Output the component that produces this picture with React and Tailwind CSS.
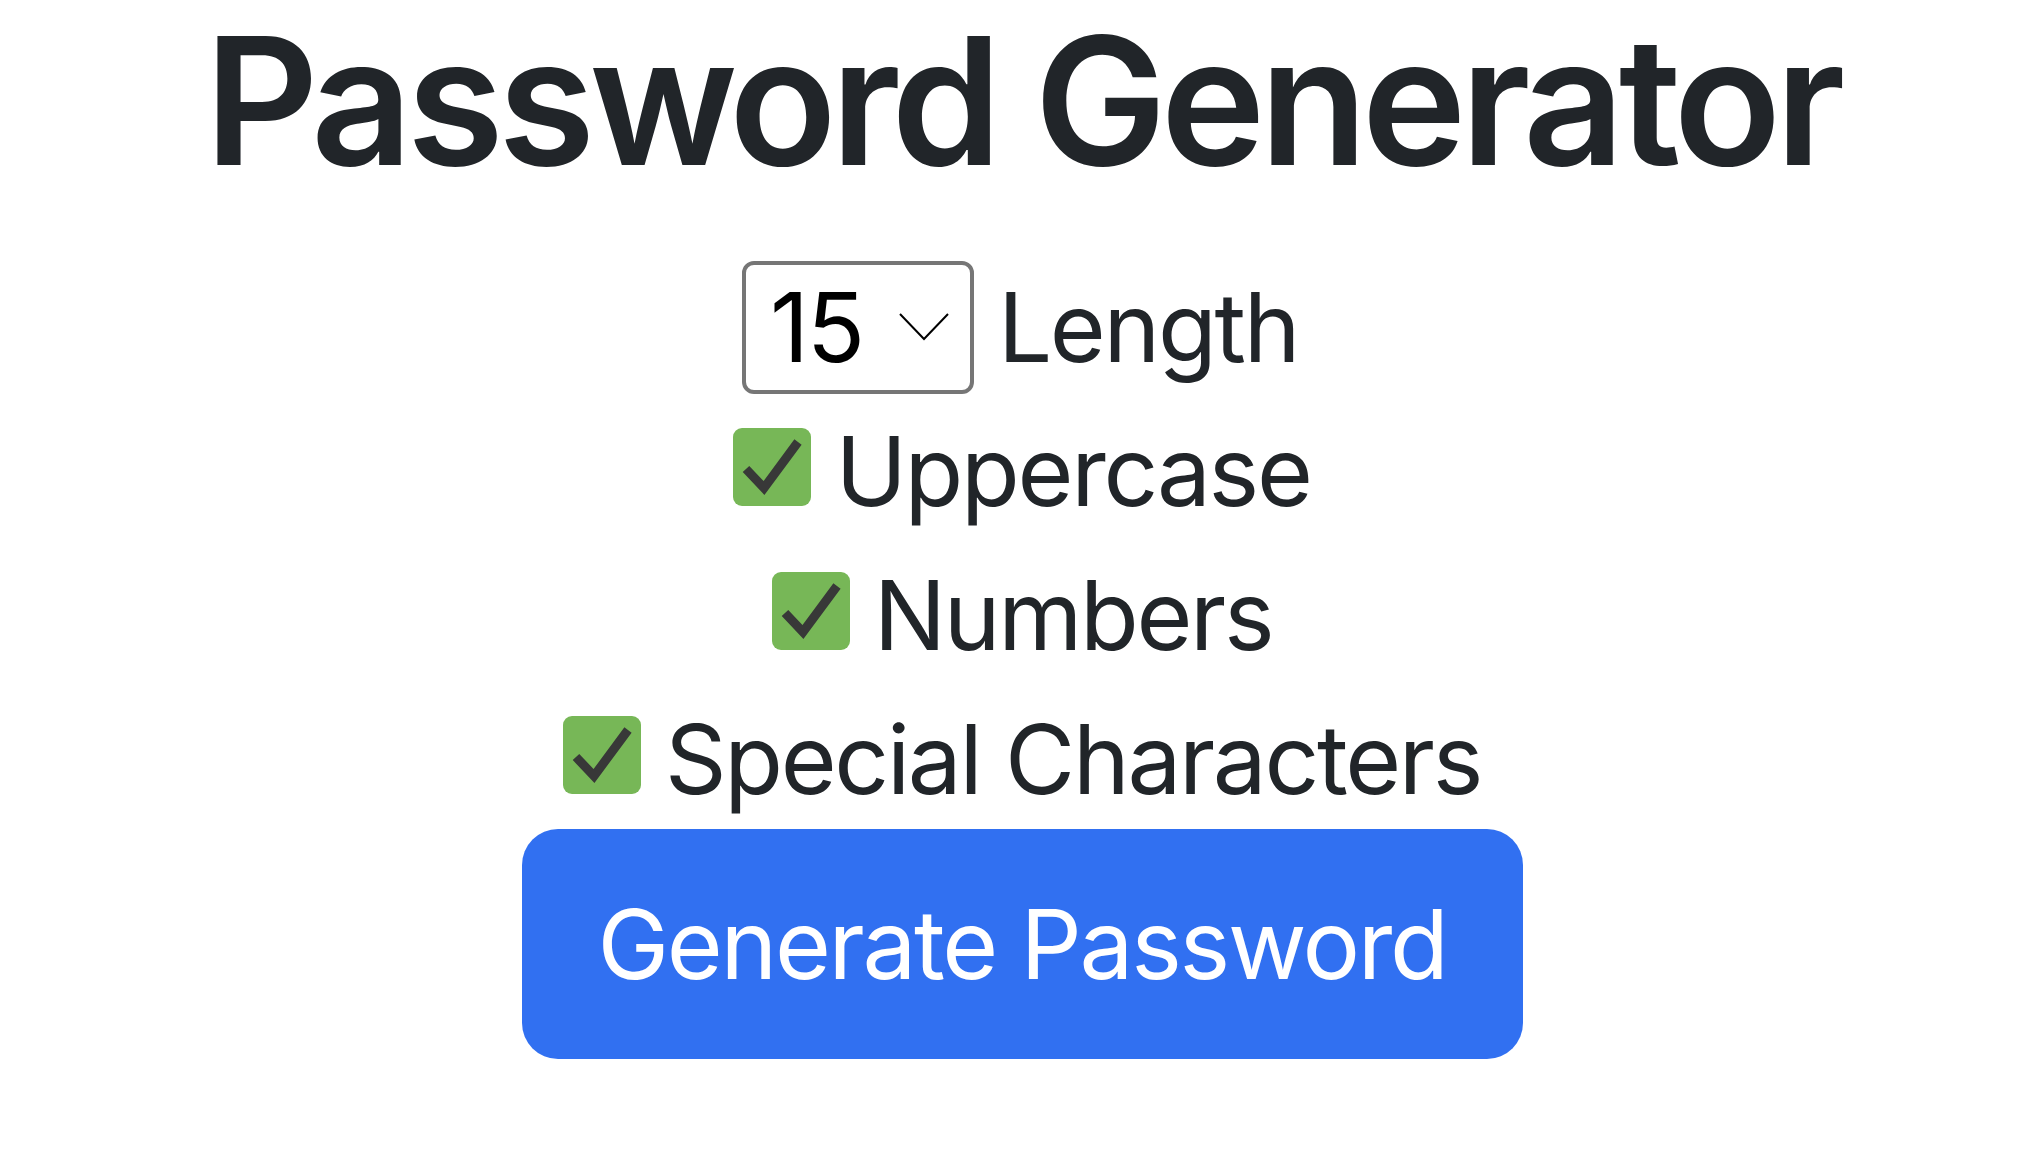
import React, { useState } from 'react';

function CheckIcon() {
  return (
    <svg width="78" height="78" viewBox="0 0 78 78" className="shrink-0">
      <rect x="0" y="0" width="78" height="78" rx="9" fill="#77b757" />
      <polyline points="13,41 31,60 65,14" fill="none" stroke="#383838" strokeWidth="9" />
    </svg>
  );
}

function Option({ label, checked }) {
  return (
    <div className="flex items-baseline gap-[24px] leading-[144px]">
      {checked && <CheckIcon />}
      <span>{label}</span>
    </div>
  );
}

export default function App() {
  const [length] = useState(15);

  const options = [
    { label: 'Uppercase', checked: true },
    { label: 'Numbers', checked: true },
    { label: 'Special Characters', checked: true },
  ];

  return (
    <div className="min-h-screen bg-white flex flex-col items-center text-[#212529] font-['Inter','Liberation_Sans',sans-serif] text-[96px] tracking-[-2.3px]">
      {/* Title */}
      <h1 className="text-[177px] font-semibold leading-[202px] tracking-[-6px] mb-[53px]">
        Password Generator
      </h1>

      {/* Length */}
      <div className="flex items-center gap-[24px] h-[144px] pr-[4px]">
        <div className="w-[232px] h-[133px] border-[4px] border-[#767676] rounded-[12px] flex items-center justify-between pl-[24px] pr-[21px] text-black">
          <span className="leading-none">{length}</span>
          <svg width="50" height="28" viewBox="0 0 50 28">
            <polyline points="1,1 25,26 49,1" fill="none" stroke="#000" strokeWidth="2" />
          </svg>
        </div>
        <span className="leading-[144px]">Length</span>
      </div>

      {/* Options */}
      {options.map((opt) => (
        <Option key={opt.label} label={opt.label} checked={opt.checked} />
      ))}

      {/* Button */}
      <button className="w-[1001px] h-[230px] mt-[-2px] rounded-[36px] bg-[#3170f1] text-white flex items-center justify-center">
        Generate Password
      </button>
    </div>
  );
}
